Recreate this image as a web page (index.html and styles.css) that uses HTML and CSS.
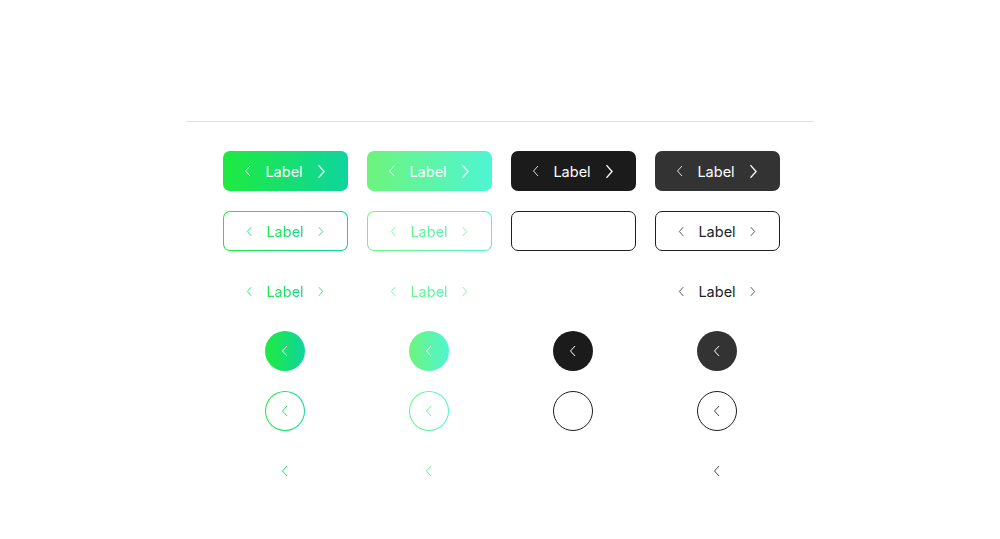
FILE: index.html
```html
<!DOCTYPE html>
<html>
<head>
<meta charset="utf-8">
<link rel="stylesheet" href="styles.css">
</head>
<body>
<svg width="0" height="0" style="position:absolute">
  <defs>
    <symbol id="cl" viewBox="0 0 8 12"><path d="M6 1 L1.5 6 L6 11" fill="none" stroke="currentColor" stroke-width="1"/></symbol>
    <symbol id="cr" viewBox="0 0 8 12"><path d="M2 1 L6.5 6 L2 11" fill="none" stroke="currentColor" stroke-width="1"/></symbol>
  </defs>
</svg>
<main class="page">
  <div class="rule"></div>
  <div class="grid">
    <!-- row 1 -->
    <div class="cell"><button class="btn fill g1"><svg class="ic"><use href="#cl"/></svg><span>Label</span><svg class="ic big"><use href="#cr"/></svg></button></div>
    <div class="cell"><button class="btn fill g2"><svg class="ic"><use href="#cl"/></svg><span>Label</span><svg class="ic big"><use href="#cr"/></svg></button></div>
    <div class="cell"><button class="btn fill d1"><svg class="ic"><use href="#cl"/></svg><span>Label</span><svg class="ic big"><use href="#cr"/></svg></button></div>
    <div class="cell"><button class="btn fill d2"><svg class="ic"><use href="#cl"/></svg><span>Label</span><svg class="ic big"><use href="#cr"/></svg></button></div>
    <!-- row 2 -->
    <div class="cell"><button class="btn line lg1"><svg class="ic c1"><use href="#cl"/></svg><span class="t1">Label</span><svg class="ic c1"><use href="#cr"/></svg></button></div>
    <div class="cell"><button class="btn line lg2"><svg class="ic c2"><use href="#cl"/></svg><span class="t2">Label</span><svg class="ic c2"><use href="#cr"/></svg></button></div>
    <div class="cell"><button class="btn line ld"></button></div>
    <div class="cell"><button class="btn line ld"><svg class="ic cd"><use href="#cl"/></svg><span class="td">Label</span><svg class="ic cd"><use href="#cr"/></svg></button></div>
    <!-- row 3 -->
    <div class="cell"><button class="btn text"><svg class="ic c1"><use href="#cl"/></svg><span class="t1">Label</span><svg class="ic c1"><use href="#cr"/></svg></button></div>
    <div class="cell"><button class="btn text"><svg class="ic c2"><use href="#cl"/></svg><span class="t2">Label</span><svg class="ic c2"><use href="#cr"/></svg></button></div>
    <div class="cell"></div>
    <div class="cell"><button class="btn text"><svg class="ic cd"><use href="#cl"/></svg><span class="td">Label</span><svg class="ic cd"><use href="#cr"/></svg></button></div>
    <!-- row 4 -->
    <div class="cell"><button class="circ fill g1"><svg class="ic"><use href="#cl"/></svg></button></div>
    <div class="cell"><button class="circ fill g2"><svg class="ic"><use href="#cl"/></svg></button></div>
    <div class="cell"><button class="circ fill d1"><svg class="ic"><use href="#cl"/></svg></button></div>
    <div class="cell"><button class="circ fill d2"><svg class="ic"><use href="#cl"/></svg></button></div>
    <!-- row 5 -->
    <div class="cell"><button class="circ line lg1"><svg class="ic c1"><use href="#cl"/></svg></button></div>
    <div class="cell"><button class="circ line lg2"><svg class="ic c2"><use href="#cl"/></svg></button></div>
    <div class="cell"><button class="circ line ld"></button></div>
    <div class="cell"><button class="circ line ld"><svg class="ic cd"><use href="#cl"/></svg></button></div>
    <!-- row 6 -->
    <div class="cell"><button class="circ text"><svg class="ic c1"><use href="#cl"/></svg></button></div>
    <div class="cell"><button class="circ text"><svg class="ic c2"><use href="#cl"/></svg></button></div>
    <div class="cell"></div>
    <div class="cell"><button class="circ text"><svg class="ic cd"><use href="#cl"/></svg></button></div>
  </div>
</main>
</body>
</html>
```

FILE: styles.css
```css
* { box-sizing: border-box; }
html, body { margin: 0; padding: 0; background: #fff; }
body { font-family: Inter, "Noto Sans", sans-serif; }

.page {
  width: 628px;
  margin: 0 auto;
  padding-top: 121px;
}
.rule {
  height: 1px;
  background: #e2e2e2;
}
.grid {
  display: grid;
  grid-template-columns: repeat(4, 144px);
  grid-auto-rows: 40px;
  row-gap: 20px;
  padding: 29px 25px 0 27px;
}
.cell {
  display: flex;
  justify-content: center;
  align-items: center;
}

.btn, .circ {
  border: none;
  padding: 0;
  margin: 0;
  font: inherit;
  display: flex;
  align-items: center;
  justify-content: center;
  background: transparent;
  position: relative;
}
.btn {
  width: 125px;
  height: 40px;
  border-radius: 7px;
  gap: 13px;
  font-size: 14.5px;
  font-weight: 400;
  color: #fff;
}
.circ {
  width: 40px;
  height: 40px;
  border-radius: 50%;
  color: #fff;
}

.ic {
  width: 8px;
  height: 12px;
  flex: none;
  color: inherit;
}
.btn.fill .ic:first-child { opacity: 0.85; }
.ic.big { width: 10px; height: 15px; }

.g1 { background: linear-gradient(90deg, #1fea3f, #0fd59e); }
.g2 { background: linear-gradient(90deg, #6df47c, #4ef5d2); }
.d1 { background: #1b1b1b; }
.d2 { background: #333333; }

/* gradient borders */
.line { border: 1px solid transparent; }
.lg1 {
  background: linear-gradient(#fff, #fff) padding-box,
              linear-gradient(90deg, #1fea3f, #0fd59e) border-box;
}
.lg2 {
  background: linear-gradient(#fff, #fff) padding-box,
              linear-gradient(90deg, #6df47c, #4ef5d2) border-box;
}
.ld { border: 1px solid #1e1e1e; background: #fff; }

.t1, .t2 {
  -webkit-background-clip: text;
  background-clip: text;
  color: transparent;
}
.t1 { background-image: linear-gradient(90deg, #1fe84a, #12d58e); }
.t2 { background-image: linear-gradient(90deg, #6ef28a, #55eeb8); }
.td { color: #222; }

.c1 { color: #24dd6a; }
.c2 { color: #6ef0a0; }
.cd { color: #444; }
.btn.line .ic, .btn.text .ic { width: 7px; height: 11px; }
```
